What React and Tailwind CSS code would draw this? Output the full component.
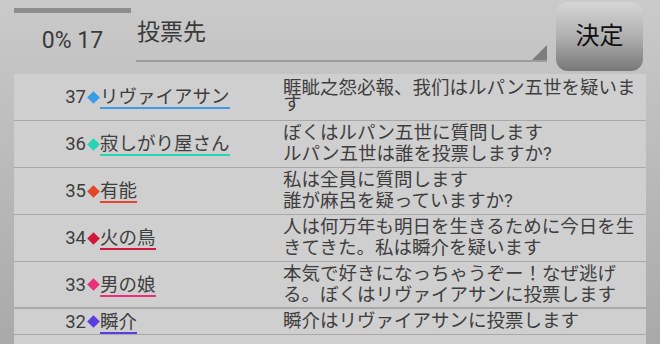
import React from 'react';

const rows = [
  { no: 37, name: 'リヴァイアサン', color: '#3a9be6', msg: '睚眦之怨必報、我们はルパン五世を疑いま\nす', tight: true },
  { no: 36, name: '寂しがり屋さん', color: '#27d4b4', msg: 'ぼくはルパン五世に質問します\nルパン五世は誰を投票しますか?' },
  { no: 35, name: '有能', color: '#e2452a', msg: '私は全員に質問します\n誰が麻呂を疑っていますか?' },
  { no: 34, name: '火の鳥', color: '#d0183c', msg: '人は何万年も明日を生きるために今日を生\nきてきた。私は瞬介を疑います' },
  { no: 33, name: '男の娘', color: '#ea2f7c', msg: '本気で好きになっちゃうぞー！なぜ逃げ\nる。ぼくはリヴァイアサンに投票します', thick: true },
  { no: 32, name: '瞬介', color: '#5a3ee0', msg: '瞬介はリヴァイアサンに投票します', short: true },
];

const Row = ({ row }) => (
  <div
    className={`flex ${row.short ? 'h-[26px]' : 'h-[47px]'} ${
      row.thick ? 'border-b-2' : 'border-b'
    } border-[#a9a9a9]`}
  >
    <div className="w-[269px] flex items-center pt-[2px]">
      <div className="w-[72px] flex justify-end text-[18.5px] leading-[20px] text-[#3e3e3e] pb-[2px]">
        {row.no}
      </div>
      <div className="w-[14px] flex justify-center pb-[2px]">
        <span
          className="block w-[9px] h-[9px] rotate-45"
          style={{ backgroundColor: row.color }}
        />
      </div>
      <span
        className="text-[18.5px] leading-[20px] text-[#3e3e3e] border-b-2"
        style={{ borderColor: row.color }}
      >
        {row.name}
      </span>
    </div>
    <div
      className={`flex-1 flex items-center whitespace-pre-line text-[18.5px] text-[#3e3e3e] ${
        row.tight ? 'leading-[16px] pb-[2px]' : 'leading-[21px]'
      }`}
    >
      {row.msg}
    </div>
  </div>
);

export default function App() {
  return (
    <div className="w-[660px] h-[344px] overflow-hidden bg-gradient-to-b from-[#cacaca] to-[#a9a9a9] font-['Roboto','Noto_Sans_CJK_JP',sans-serif]">
      <div className="h-[74px] flex pl-[14px]">
        <div className="w-[117px] flex flex-col">
          <div className="mt-[8px] h-[5px] bg-[#8d8d8d]" />
          <div className="mt-[14px] text-center text-[23px] leading-[28px] text-[#3a3a3a]">0% 17</div>
        </div>
        <div className="ml-[5px] w-[411px] h-[62px] relative border-b-2 border-[#9c9c9c]">
          <div className="pl-[1px] pt-[19px] text-[23px] leading-[28px] text-[#3a3a3a]">投票先</div>
          <svg className="absolute right-0 bottom-0" width="15" height="15" viewBox="0 0 15 15">
            <polygon points="15,0 15,15 0,15" fill="#7d7d7d" />
          </svg>
        </div>
        <button className="ml-[9px] mt-[2px] w-[87px] h-[69px] rounded-[12px] bg-gradient-to-b from-[#d6d6d6] via-[#b0b0b0] to-[#787878] text-[24px] text-[#111] flex items-center justify-center pb-[2px]">
          決定
        </button>
      </div>
      <div className="ml-[14px] w-[632px] h-[270px] bg-[#cfcfcf]">
        {rows.map((row) => (
          <Row key={row.no} row={row} />
        ))}
      </div>
    </div>
  );
}
